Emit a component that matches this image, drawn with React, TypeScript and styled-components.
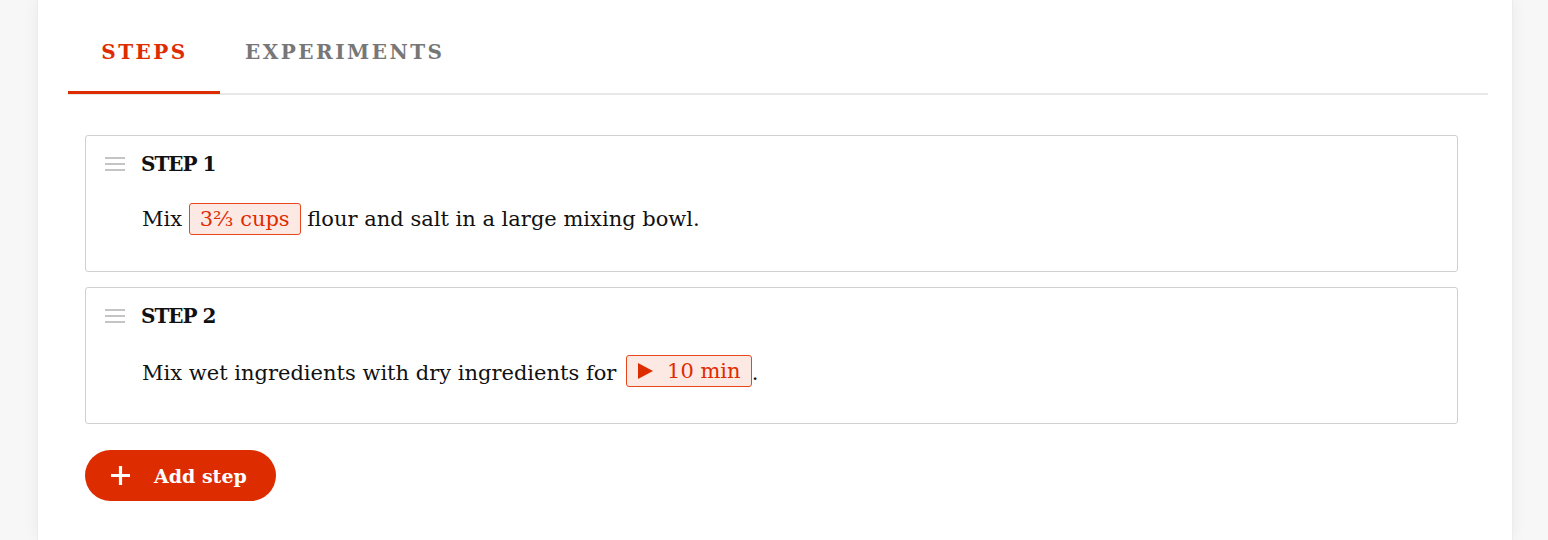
import React from "react";
import styled, { createGlobalStyle } from "styled-components";

const Global = createGlobalStyle`
  html, body { margin: 0; padding: 0; }
  body {
    background: #f7f7f7;
    font-family: "Roboto Slab", "DejaVu Serif", serif;
    color: #111;
    overflow: hidden;
  }
`;

const Page = styled.div`
  display: flex;
  height: 540px;
  padding: 0 35px 0 37px;
`;

const Card = styled.main`
  flex: 1;
  background: #fff;
  border-left: 1px solid #ececec;
  border-right: 1px solid #ececec;
  box-shadow: 0 0 14px rgba(0, 0, 0, 0.06);
  padding: 10px 24px 0 30px;
  display: flex;
  flex-direction: column;
`;

const TabBar = styled.nav`
  display: flex;
  border-bottom: 2px solid #e8e8e8;
`;

const Tab = styled.div<{ $active?: boolean }>`
  position: relative;
  min-width: 152px;
  padding: 31px 24px 30px 25px;
  box-sizing: border-box;
  display: flex;
  justify-content: center;
  font-size: 20px;
  line-height: 22px;
  font-weight: 700;
  letter-spacing: 2.5px;
  color: ${(p) => (p.$active ? "#dd2c00" : "#777")};
  &::after {
    content: "";
    display: ${(p) => (p.$active ? "block" : "none")};
    position: absolute;
    left: 0;
    right: 0;
    bottom: -1px;
    height: 3px;
    background: #dd2c00;
  }
`;

const StepList = styled.section`
  display: flex;
  flex-direction: column;
  gap: 15px;
  margin: 40px 30px 0 17px;
`;

const StepCard = styled.article`
  border: 1px solid #d0d0d0;
  border-radius: 3px;
  padding: 16px 20px 36px 19px;
  display: grid;
  grid-template-columns: 36px 1fr;
`;

const Handle = styled.div`
  height: 24px;
  display: flex;
  align-items: center;
`;

const StepBody = styled.div`
  display: flex;
  flex-direction: column;
`;

const StepTitle = styled.h3`
  margin: 0;
  font-size: 20px;
  line-height: 24px;
  font-weight: 700;
  letter-spacing: -1px;
`;

const StepText = styled.p`
  margin: 27px 0 0 1px;
  height: 32px;
  font-size: 21px;
  line-height: 32px;
  font-weight: 400;
  color: #111;
  white-space: nowrap;
`;

const Chip = styled.span<{ $lead?: number }>`
  display: inline-flex;
  align-items: center;
  gap: 13px;
  height: 32px;
  box-sizing: border-box;
  padding: 0 10px;
  margin-left: ${(p) => p.$lead ?? 0}px;
  vertical-align: baseline;
  border: 1px solid #e8461d;
  border-radius: 3px;
  background: #fde9e4;
  color: #dd2c00;
  font-weight: 300;
  font-size: 21px;
`;

const AddButton = styled.button`
  align-self: flex-start;
  margin: 26px 0 0 17px;
  height: 51px;
  padding: 0 29px 0 25px;
  display: flex;
  align-items: center;
  gap: 23px;
  border: none;
  border-radius: 26px;
  background: #dd2c00;
  color: #fff;
  font-family: inherit;
  font-size: 19px;
  font-weight: 700;
`;

const HandleIcon = () => (
  <svg width="20" height="14" viewBox="0 0 20 14">
    <g fill="#c4c4c4">
      <rect x="0" y="0" width="20" height="2" />
      <rect x="0" y="6" width="20" height="2" />
      <rect x="0" y="12" width="20" height="2" />
    </g>
  </svg>
);

const PlayIcon = () => (
  <svg width="17" height="18" viewBox="0 0 17 18">
    <path d="M1 1 L16 9 L1 17 Z" fill="#dd2c00" />
  </svg>
);

const PlusIcon = () => (
  <svg width="21" height="21" viewBox="0 0 21 21">
    <path d="M10.5 1 V20 M1 10.5 H20" stroke="#fff" strokeWidth="3.2" />
  </svg>
);

export default function App() {
  return (
    <>
      <Global />
      <Page>
        <Card>
          <TabBar>
            <Tab $active>STEPS</Tab>
            <Tab>EXPERIMENTS</Tab>
          </TabBar>
          <StepList>
            <StepCard>
              <Handle>
                <HandleIcon />
              </Handle>
              <StepBody>
                <StepTitle>STEP 1</StepTitle>
                <StepText>
                  Mix <Chip>3⅔ cups</Chip> flour and salt in a large mixing bowl.
                </StepText>
              </StepBody>
            </StepCard>
            <StepCard>
              <Handle>
                <HandleIcon />
              </Handle>
              <StepBody>
                <StepTitle>STEP 2</StepTitle>
                <StepText>
                  Mix wet ingredients with dry ingredients for{" "}
                  <Chip $lead={3}>
                    <PlayIcon />
                    10 min
                  </Chip>
                  .
                </StepText>
              </StepBody>
            </StepCard>
          </StepList>
          <AddButton>
            <PlusIcon />
            Add step
          </AddButton>
        </Card>
      </Page>
    </>
  );
}
